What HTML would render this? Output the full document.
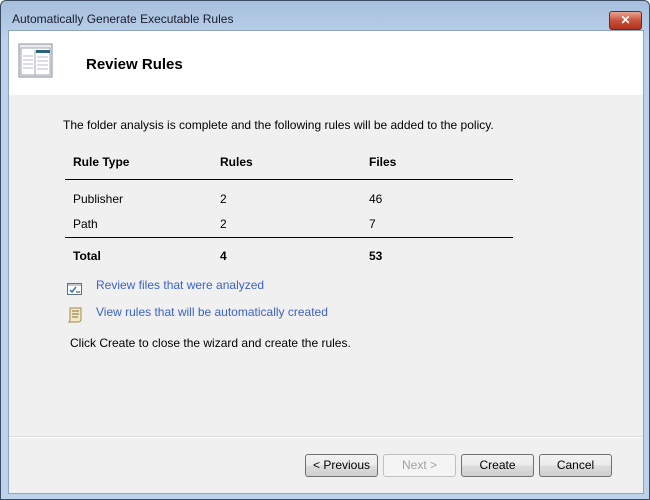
<!DOCTYPE html>
<html><head><style>
body{margin:0;width:650px;height:500px;overflow:hidden;font-family:"Liberation Sans",sans-serif;font-size:12px;color:#000}
.win{position:absolute;left:0;top:0;width:648px;height:498px;border:1px solid #3a4d63;border-radius:6px 6px 0 0;background:linear-gradient(#a6bfdc,#bcd2ec 40px,#bcd3ec)}
.title{position:absolute;left:11px;top:11px;font-size:12px;color:#1a1a2a}
.close{position:absolute;left:608px;top:10px;width:31px;height:17px;border:1px solid #6b2a20;border-radius:3px;background:linear-gradient(#e8a592,#c9533c 50%,#b0311c);color:#fff;font-weight:bold;text-align:center;line-height:17px;font-size:12px}
.client{position:absolute;left:7px;top:29px;width:634px;height:462px;background:#f0f0f0;border:1px solid #8ea4bf}
.hdr{position:absolute;left:0;top:0;width:634px;height:64px;background:#fff}
.h1{position:absolute;left:77px;top:25px;font-size:15px;font-weight:bold}
.t{position:absolute;font-size:12px}
.b{font-weight:bold}
.line{position:absolute;left:56px;width:448px;height:1px;background:#000}
.lnk{color:#3a62c8}
.btn{position:absolute;top:423px;width:71px;height:21px;border:1px solid #707070;border-radius:3px;background:linear-gradient(#f2f2f2,#ebebeb 50%,#dddddd 51%,#cfcfcf);text-align:center;line-height:21px;font-size:12px}
</style></head><body>
<div class="win">
<div class="title">Automatically Generate Executable Rules</div>
<div class="close">✕</div>
<div class="client">
<div class="hdr">
<svg style="position:absolute;left:9px;top:12px" width="36" height="36"><rect x="1" y="1" width="33" height="33" fill="#e8ecf0" stroke="#8a9098"/><rect x="3" y="5" width="29" height="27" fill="#fff" stroke="#a0a8b0"/><rect x="18" y="7" width="14" height="3" fill="#2c6080"/><line x1="17" y1="7" x2="17" y2="32" stroke="#a0a8b0"/><g stroke="#b8bec4"><line x1="5" y1="13" x2="15" y2="13"/><line x1="5" y1="17" x2="15" y2="17"/><line x1="5" y1="21" x2="15" y2="21"/><line x1="5" y1="25" x2="15" y2="25"/><line x1="19" y1="14" x2="30" y2="14"/><line x1="19" y1="18" x2="30" y2="18"/><line x1="19" y1="22" x2="30" y2="22"/><line x1="19" y1="26" x2="30" y2="26"/></g></svg>
<div class="h1">Review Rules</div>
</div>
<div class="t" style="left:54px;top:87px">The folder analysis is complete and the following rules will be added to the policy.</div>
<div class="t b" style="left:64px;top:124px">Rule Type</div>
<div class="t b" style="left:211px;top:124px">Rules</div>
<div class="t b" style="left:360px;top:124px">Files</div>
<div class="line" style="top:148px"></div>
<div class="t" style="left:64px;top:161px">Publisher</div>
<div class="t" style="left:211px;top:161px">2</div>
<div class="t" style="left:360px;top:161px">46</div>
<div class="t" style="left:64px;top:186px">Path</div>
<div class="t" style="left:211px;top:186px">2</div>
<div class="t" style="left:360px;top:186px">7</div>
<div class="line" style="top:206px"></div>
<div class="t b" style="left:64px;top:218px">Total</div>
<div class="t b" style="left:211px;top:218px">4</div>
<div class="t b" style="left:360px;top:218px">53</div>
<svg style="position:absolute;left:58px;top:251px" width="16" height="14"><rect x="0.5" y="1.5" width="14" height="11" fill="#fff" stroke="#607080"/><line x1="1" y1="3" x2="14" y2="3" stroke="#8090a0"/><path d="M3 8l2 2 4-5" stroke="#2a70c8" fill="none" stroke-width="1.5"/><line x1="9" y1="10" x2="13" y2="10" stroke="#333"/></svg>
<div class="t lnk" style="left:87px;top:247px">Review files that were analyzed</div>
<svg style="position:absolute;left:58px;top:276px" width="16" height="16"><path d="M3 1h11v11c0 2-1 3-3 3H2c1-1 1-2 1-3z" fill="#f4e8c0" stroke="#a08a50"/><g stroke="#807050"><line x1="5" y1="4" x2="12" y2="4"/><line x1="5" y1="7" x2="12" y2="7"/><line x1="5" y1="10" x2="11" y2="10"/></g></svg>
<div class="t lnk" style="left:87px;top:274px">View rules that will be automatically created</div>
<div class="t" style="left:61px;top:305px">Click Create to close the wizard and create the rules.</div>
<div style="position:absolute;left:0;top:405px;width:634px;height:1px;background:#dcdcdc;border-bottom:1px solid #fff"></div>
<div class="btn" style="left:296px">&lt; Previous</div>
<div class="btn" style="left:374px;color:#a0a0a0;border-color:#c0c0c0;background:#f4f4f4">Next &gt;</div>
<div class="btn" style="left:452px">Create</div>
<div class="btn" style="left:530px">Cancel</div>
</div>
</div>
</body></html>
